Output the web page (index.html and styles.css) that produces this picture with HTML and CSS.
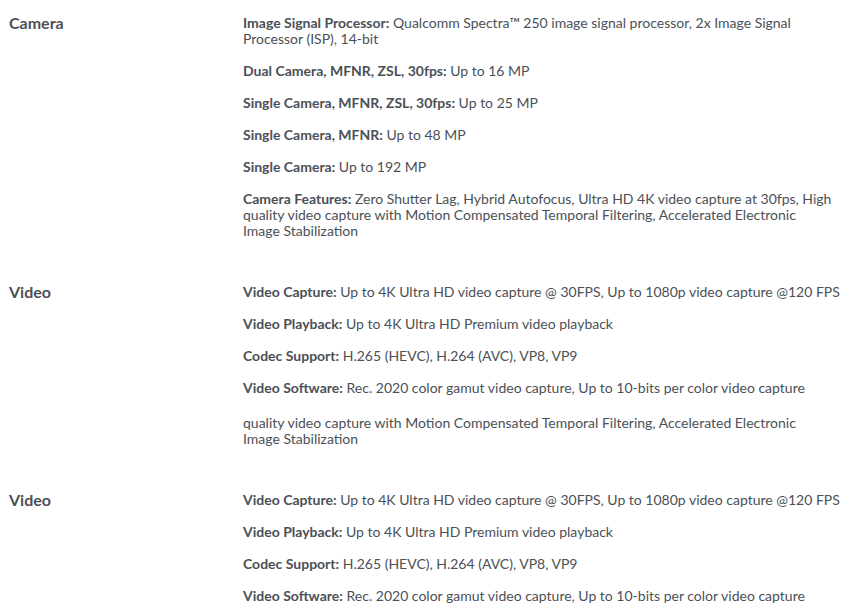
FILE: index.html
```html
<!DOCTYPE html>
<html lang="en">
  <head>
    <title>Specifications</title>
    <meta charset="UTF-8">
    <meta name="viewport" content="width=device-width, initial-scale=1.0">
    <link rel="stylesheet" href="styles.css">
  </head>
  <body>
    <div class="specs">
      <div class="spec-row">
        <h3 class="spec-title">Camera</h3>
        <div class="spec-list">
          <p><b>Image Signal Processor:</b> Qualcomm Spectra&trade; 250 image signal processor, 2x Image Signal Processor (ISP), 14-bit</p>
          <p><b>Dual Camera, MFNR, ZSL, 30fps:</b> Up to 16 MP</p>
          <p><b>Single Camera, MFNR, ZSL, 30fps:</b> Up to 25 MP</p>
          <p><b>Single Camera, MFNR:</b> Up to 48 MP</p>
          <p><b>Single Camera:</b> Up to 192 MP</p>
          <p><b>Camera Features:</b> Zero Shutter Lag, Hybrid Autofocus, Ultra HD 4K video capture at 30fps, High quality video capture with Motion Compensated Temporal Filtering, Accelerated Electronic<br>Image Stabilization</p>
        </div>
      </div>
      <div class="spec-row">
        <h3 class="spec-title">Video</h3>
        <div class="spec-list">
          <p><b>Video Capture:</b> Up to 4K Ultra HD video capture @ 30FPS, Up to 1080p video capture @120 FPS</p>
          <p><b>Video Playback:</b> Up to 4K Ultra HD Premium video playback</p>
          <p><b>Codec Support:</b> H.265 (HEVC), H.264 (AVC), VP8, VP9</p>
          <p><b>Video Software:</b> Rec. 2020 color gamut video capture, Up to 10-bits per color video capture</p>
          <p class="extra">quality video capture with Motion Compensated Temporal Filtering, Accelerated Electronic<br>Image Stabilization</p>
        </div>
      </div>
      <div class="spec-row">
        <h3 class="spec-title">Video</h3>
        <div class="spec-list">
          <p><b>Video Capture:</b> Up to 4K Ultra HD video capture @ 30FPS, Up to 1080p video capture @120 FPS</p>
          <p><b>Video Playback:</b> Up to 4K Ultra HD Premium video playback</p>
          <p><b>Codec Support:</b> H.265 (HEVC), H.264 (AVC), VP8, VP9</p>
          <p><b>Video Software:</b> Rec. 2020 color gamut video capture, Up to 10-bits per color video capture</p>
        </div>
      </div>
    </div>
  </body>
</html>
```
FILE: styles.css
```css
* { box-sizing: border-box; }

body
{
    margin: 0;
    background: #ffffff;
    color: #4b5057;
    font-family: Lato, "Noto Sans", sans-serif;
    font-size: 14px;
    line-height: 16px;
}

.specs
{
    padding: 15px 0 0 9px;
}

.spec-row
{
    display: grid;
    grid-template-columns: 234px 1fr;
    margin-bottom: 45px;
}

.spec-row:last-child { margin-bottom: 0; }

.spec-title
{
    margin: 0;
    font-size: 16px;
    font-weight: 700;
    line-height: 16px;
}

.spec-list p
{
    margin: 0 0 16px 0;
    padding-right: 6px;
}

.spec-list p:last-child { margin-bottom: 0; }

.spec-list b { font-weight: 700; }

.spec-list .extra { margin-top: 19px; }
```
